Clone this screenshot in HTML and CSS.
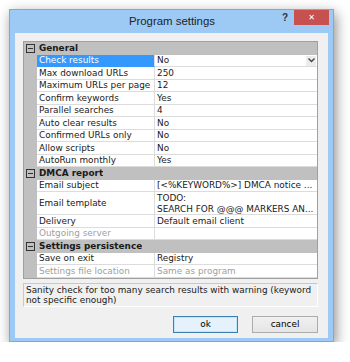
FILE: index.html
```html
<!DOCTYPE html>
<html lang="en">
  <head>
    <meta charset="UTF-8" />
    <title>Program settings</title>
    <link rel="stylesheet" href="styles.css">
  </head>
  <body>
    <div class="window">
      <div class="titlebar">
        <span class="title">Program settings</span>
        <span class="help">?</span>
        <span class="close">&#x2715;</span>
      </div>

      <div class="client">
        <div class="grid">
          <div class="row head"><span class="gutter"><span class="toggle"></span></span><span class="name">General</span></div>
          <div class="row selected"><span class="gutter"></span><span class="name">Check results</span><span class="value">No<span class="drop"><svg width="7" height="5" viewBox="0 0 7 5"><path d="M0.5 0.5 L3.5 3.5 L6.5 0.5" fill="none" stroke="#444" stroke-width="1.4"/></svg></span></span></div>
          <div class="row"><span class="gutter"></span><span class="name">Max download URLs</span><span class="value">250</span></div>
          <div class="row"><span class="gutter"></span><span class="name">Maximum URLs per page</span><span class="value">12</span></div>
          <div class="row"><span class="gutter"></span><span class="name">Confirm keywords</span><span class="value">Yes</span></div>
          <div class="row"><span class="gutter"></span><span class="name">Parallel searches</span><span class="value">4</span></div>
          <div class="row"><span class="gutter"></span><span class="name">Auto clear results</span><span class="value">No</span></div>
          <div class="row"><span class="gutter"></span><span class="name">Confirmed URLs only</span><span class="value">No</span></div>
          <div class="row"><span class="gutter"></span><span class="name">Allow scripts</span><span class="value">No</span></div>
          <div class="row"><span class="gutter"></span><span class="name">AutoRun monthly</span><span class="value">Yes</span></div>

          <div class="row head"><span class="gutter"><span class="toggle"></span></span><span class="name">DMCA report</span></div>
          <div class="row"><span class="gutter"></span><span class="name">Email subject</span><span class="value">[&lt;%KEYWORD%&gt;] DMCA notice ...</span></div>
          <div class="row tall"><span class="gutter"></span><span class="name">Email template</span><span class="value">TODO:<br>SEARCH FOR @@@ MARKERS AN...</span></div>
          <div class="row"><span class="gutter"></span><span class="name">Delivery</span><span class="value">Default email client</span></div>
          <div class="row disabled"><span class="gutter"></span><span class="name">Outgoing server</span><span class="value"></span></div>

          <div class="row head"><span class="gutter"><span class="toggle"></span></span><span class="name">Settings persistence</span></div>
          <div class="row"><span class="gutter"></span><span class="name">Save on exit</span><span class="value">Registry</span></div>
          <div class="row disabled"><span class="gutter"></span><span class="name">Settings file location</span><span class="value">Same as program</span></div>
        </div>

        <div class="description">
          Sanity check for too many search results with warning (keyword not specific enough)
        </div>

        <div class="buttons">
          <button class="default">ok</button>
          <button>cancel</button>
        </div>
      </div>
    </div>
  </body>
</html>
```

FILE: styles.css
```css
body {
  margin: 0;
  background: #fff;
  font-family: "DejaVu Sans", sans-serif;
  font-size: 8.9px;
  color: #1a1a1a;
}

.window {
  margin: 9px 0 0 9px;
  width: 325px;
  height: 333px;
  background: #9ccaf4;
  border: 1px solid #7ea9d6;
  box-sizing: border-box;
  box-shadow: 2px 4px 12px rgba(0, 0, 0, 0.45);
  display: flex;
  flex-direction: column;
}

.titlebar {
  height: 23px;
  display: flex;
  align-items: flex-start;
}

.title {
  flex: 1;
  text-align: center;
  font-family: "Liberation Sans", sans-serif;
  font-size: 11.4px;
  line-height: 23px;
  padding-left: 52px;
  color: #222;
}

.help {
  font-family: "Liberation Sans", sans-serif;
  font-weight: bold;
  font-size: 10px;
  line-height: 16px;
  margin-right: 6px;
  color: #333;
}

.close {
  width: 35px;
  height: 15px;
  background: #c75050;
  color: #fff;
  font-size: 8px;
  line-height: 15px;
  text-align: center;
  margin-right: 4px;
}

.client {
  flex: 1;
  margin: 0 5px 3px 5px;
  background: #f0f0f0;
  padding: 8px 8px 0 8px;
}

.grid {
  border: 1px solid #a0a0a0;
  background: #fff;
  width: 295px;
  box-sizing: border-box;
}

.row {
  display: flex;
  height: 12.5px;
  line-height: 12px;
}

.row.tall {
  height: 23px;
  line-height: 10.5px;
}

.gutter {
  width: 13px;
  flex-shrink: 0;
  background: #c0c0c0;
  display: flex;
  align-items: center;
  justify-content: center;
}

.name {
  width: 115px;
  flex-shrink: 0;
  padding-left: 2px;
  border-bottom: 1px solid #dcdcdc;
  border-right: 1px solid #dcdcdc;
  white-space: nowrap;
  overflow: hidden;
  display: flex;
  align-items: center;
}

.value {
  flex: 1;
  padding-left: 2px;
  border-bottom: 1px solid #dcdcdc;
  white-space: nowrap;
  overflow: hidden;
  display: flex;
  align-items: center;
  position: relative;
}

.row.tall .value {
  display: block;
  padding-top: 1px;
}

.row.head {
  background: #c0c0c0;
  font-weight: bold;
}

.row.head .name {
  border: none;
  width: auto;
}

.toggle {
  width: 7px;
  height: 7px;
  border: 1px solid #333;
  position: relative;
  background: #c0c0c0;
}

.toggle::after {
  content: "";
  position: absolute;
  left: 1px;
  right: 1px;
  top: 3px;
  height: 1px;
  background: #333;
}

.row.selected .name {
  background: #3399ff;
  color: #fff;
  border-bottom-color: #3399ff;
}

.row.disabled {
  color: #a0a0a0;
}

.drop {
  position: absolute;
  right: 1px;
  top: 1px;
  width: 10px;
  height: 10px;
  background: #ececec;
  display: flex;
  align-items: center;
  justify-content: center;
}

.description {
  margin-top: 4px;
  width: 295px;
  height: 24px;
  box-sizing: border-box;
  border: 1px solid #c8c8c8;
  border-right-color: #fff;
  border-bottom-color: #fff;
  padding: 1px 2px;
  line-height: 10.5px;
}

.buttons {
  display: flex;
  justify-content: flex-end;
  gap: 14px;
  width: 295px;
  margin-top: 9px;
}

button {
  font-family: "DejaVu Sans", sans-serif;
  font-size: 8.9px;
  height: 17px;
  width: 66px;
  padding: 0;
  background: linear-gradient(#f0f0f0, #e5e5e5);
  border: 1px solid #acacac;
  color: #000;
}

button.default {
  width: 65px;
  border-color: #3c7fb1;
  box-shadow: inset 0 0 0 1px #bee6fd;
  background: #e5f1fb;
}
```
